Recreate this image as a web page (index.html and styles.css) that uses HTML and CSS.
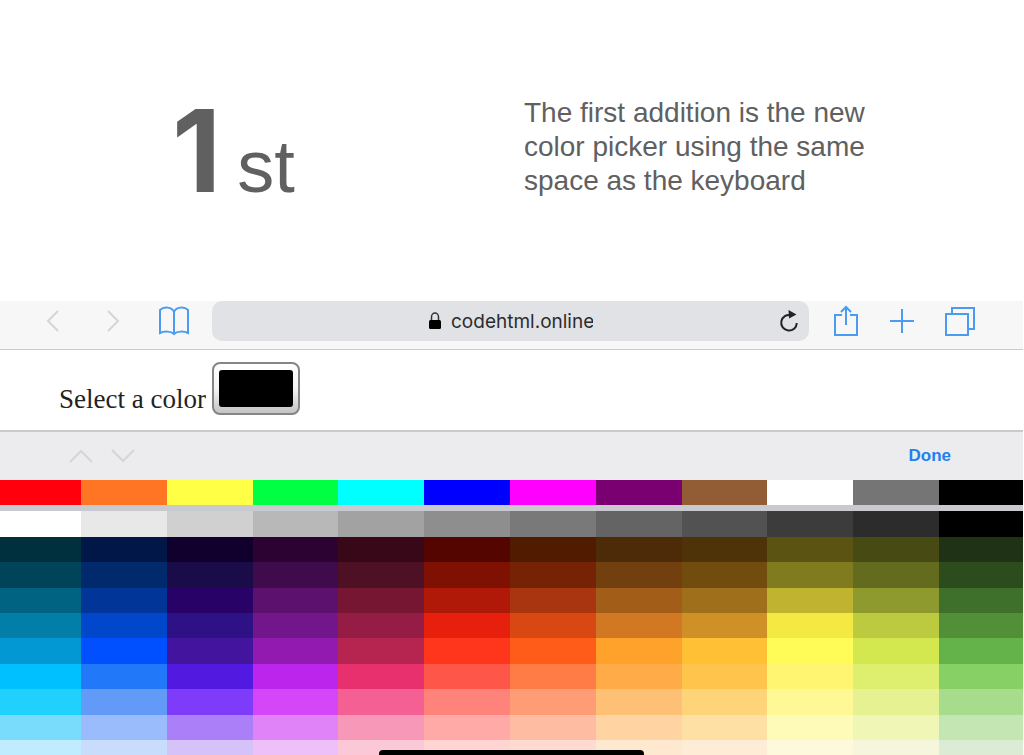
FILE: index.html
```
<!DOCTYPE html>
<html lang="en">
<head>
<meta charset="utf-8">
<meta name="viewport" content="width=device-width, initial-scale=1">
<title>Color picker</title>
<link rel="stylesheet" href="styles.css">
</head>
<body>
<main class="page">
  <section class="intro">
    <h1 class="ordinal"><span class="ordinal-number">1</span><span class="ordinal-suffix">st</span></h1>
    <p class="intro-text">The first addition is the new color picker using the same space as the keyboard</p>
  </section>

  <section class="device">
    <nav class="toolbar" aria-label="Browser">
      <div class="nav-group">
        <button class="icon-button faded" aria-label="Back"><svg width="14" height="22" viewBox="0 0 14 22"><path d="M12 1 2 11l10 10"/></svg></button>
        <button class="icon-button faded" aria-label="Forward"><svg width="14" height="22" viewBox="0 0 14 22"><path d="M2 1l10 10L2 21"/></svg></button>
        <button class="icon-button" aria-label="Bookmarks"><svg width="32" height="30" viewBox="0 0 32 30"><path d="M16 28V6C14 1 6 0 2 4v23c4-2 11-2 14 1 3-3 10-3 14-1V4c-4-4-12-3-14 2"/></svg></button>
      </div>
      <div class="address">
        <svg class="lock" width="14" height="18" viewBox="0 0 14 18"><path d="M3.500 9V5a3.500 4 0 0 1 7 0v4" fill="none" stroke="#333" stroke-width="1.500"/><rect x="1" y="8" width="12" height="9" rx="1.500"/></svg>
        <input class="address-input" type="text" value="codehtml.online" aria-label="Address">
        <button class="icon-button reload" aria-label="Reload"><svg width="20" height="22" viewBox="0 0 20 22"><path d="M12 5.200A7.800 7.800 0 1 0 17.800 13"/><path class="solid" d="M9.500 0l8 4.500-7.500 4z"/></svg></button>
      </div>
      <div class="action-group">
        <button class="icon-button" aria-label="Share"><svg width="26" height="32" viewBox="0 0 26 32"><path d="M9 10H2v20h22V10h-7M13 20V2M8 7l5-5 5 5"/></svg></button>
        <button class="icon-button" aria-label="New tab"><svg width="26" height="26" viewBox="0 0 26 26"><path d="M13 1v24M1 13h24"/></svg></button>
        <button class="icon-button" aria-label="Tabs"><svg width="30" height="30" viewBox="0 0 30 30"><path d="M1 8h22v21H1zM7 8V2h22v21h-6"/></svg></button>
      </div>
    </nav>

    <div class="web-content">
      <label for="color">Select a color</label>
      <input class="color-well" id="color" type="color" value="#000000">
    </div>

    <div class="accessory">
      <button class="icon-button faded" aria-label="Previous field"><svg width="24" height="14" viewBox="0 0 24 14"><path d="M1 13 12 2l11 11"/></svg></button>
      <button class="icon-button faded" aria-label="Next field"><svg width="24" height="14" viewBox="0 0 24 14"><path d="M1 1l11 11L23 1"/></svg></button>
      <button class="done">Done</button>
    </div>

    <div class="swatches presets" id="presets"></div>
    <div class="swatches palette" id="palette"></div>
    <div class="home-indicator"></div>
  </section>
</main>
<script src="palette.js"></script>
</body>
</html>
```
FILE: styles.css
```
* { box-sizing: border-box; }

body {
  margin: 0;
  background: #fff;
  font-family: "Liberation Sans", Arial, sans-serif;
}

button {
  border: 0;
  padding: 0;
  background: none;
  font: inherit;
}

.page {
  min-height: 100vh;
  display: flex;
  flex-direction: column;
}

.intro {
  display: grid;
  grid-template-columns: 1fr 1fr;
  padding: 96px 0 103px;
  color: #606060;
}

.ordinal {
  display: flex;
  align-items: baseline;
  gap: 16px;
  height: 102px;
  margin: 0;
  padding-left: 172px;
  line-height: 110px;
}

.ordinal-number {
  font-family: Inter, sans-serif;
  font-size: 114px;
  font-weight: 700;
}

.ordinal-suffix {
  font-size: 74px;
  font-weight: 400;
}

.intro-text {
  max-width: 372px;
  margin: 0;
  padding-left: 12px;
  font-size: 28px;
  line-height: 34px;
}

.device {
  position: relative;
  flex: 1;
  display: flex;
  flex-direction: column;
  margin-right: 1px;
}

.toolbar {
  display: flex;
  align-items: center;
  gap: 24px;
  padding: 0 48px 8px 46px;
  border-bottom: 1px solid #cbcbcd;
  background: #f7f7f7;
}

.nav-group,
.action-group {
  display: flex;
  align-items: center;
}

.nav-group { gap: 46px; margin-right: -2px; }
.nav-group .icon-button:last-child { margin-left: -8px; }
.action-group { gap: 30px; }

.icon-button { display: flex; color: #4b9cf0; }

.icon-button svg {
  fill: none;
  stroke: currentColor;
  stroke-width: 2;
}

.icon-button.faded { color: #d5d5d7; }

.address {
  position: relative;
  flex: 1;
  display: flex;
  align-items: center;
  justify-content: center;
  gap: 9px;
  height: 40px;
  border-radius: 10px;
  background: #e1e2e6;
}

.address-input {
  width: 142px;
  border: 0;
  padding: 0;
  background: none;
  color: #2c2c2e;
  font-family: Inter, "Liberation Sans", sans-serif;
  font-size: 19px;
}

.icon-button.reload {
  position: absolute;
  right: 10px;
  color: #222;
}

.reload .solid { fill: currentColor; stroke: none; }

.web-content {
  display: flex;
  align-items: flex-start;
  gap: 6px;
  padding: 12px 59px 15px;
  border-bottom: 2px solid #cacacc;
  color: #222;
  font-family: "Liberation Serif", "Times New Roman", serif;
  font-size: 27px;
  line-height: 30px;
}

.web-content label { padding-top: 22px; }

.color-well {
  appearance: none;
  width: 88px;
  height: 53px;
  border: 2px solid #858585;
  border-radius: 8px;
  padding: 6px 5px;
  background: linear-gradient(#fff, #f4f4f4 50%, #c4c4c4);
}

.color-well::-webkit-color-swatch-wrapper { padding: 0; }
.color-well::-webkit-color-swatch { border: 0; border-radius: 3px; }

.accessory {
  display: flex;
  align-items: center;
  gap: 18px;
  height: 48px;
  padding: 0 72px 0 69px;
  background: #ececef;
}

.done {
  margin-left: auto;
  color: #2380ee;
  font-size: 17px;
  font-weight: 700;
}

.swatches {
  display: grid;
  grid-template-columns: 810fr repeat(10, 858fr) 840fr;
}

.presets {
  grid-template-rows: 25px;
  border-bottom: 6px solid #c9c9d0;
}

.palette {
  flex: 1;
  grid-template-rows: 26px 25px 26px 25px 25px 26px 25px 26px 25px minmax(15px, 1fr);
}

.home-indicator {
  position: absolute;
  bottom: 0;
  left: 37%;
  width: 26%;
  height: 5px;
  border-radius: 4px 4px 0 0;
  background: #000;
}
```
FILE: palette.js
```
const presets = ["#ff000c #ff7524 #ffff45 #00ff42 #00ffff #0000ff #ff00ff #7a0072 #925c34 #ffffff #757575 #000000"];

const palette = [
  "#ffffff #e8e8e8 #d0d0d0 #b8b8b8 #a2a2a2 #8e8e8e #797979 #646464 #525252 #3c3c3c #2c2c2c #000000",
  "#002f3d #001748 #11002e #2c0232 #390818 #540500 #511b00 #4e2b08 #4e3208 #5a5312 #474a12 #203215",
  "#014459 #012a6c #190c48 #3f0b4c #4d1024 #7f1102 #762205 #71400e #724b0f #817b20 #636b1e #2c4c1d",
  "#016382 #013598 #290268 #5c116e #761633 #b01908 #a93410 #a25d18 #a06f1c #bfb330 #8e9a2e #3e702b",
  "#017fa9 #0147cb #2f1186 #72168c #951c44 #e6200c #d94712 #d27822 #cf9126 #f4e842 #bbca3e #529038",
  "#0198d4 #0050ff #43159f #921ab0 #b62450 #ff361c #ff5c19 #ffa22c #ffc036 #fffc57 #d2e84e #64b24a",
  "#00c0ff #2178f8 #521ae0 #bc25eb #e9306f #ff564a #ff7c46 #ffac48 #ffc44c #fff570 #deee6e #86d066",
  "#20d0fd #629af8 #7e3bfa #d446f8 #f46093 #ff827b #fe9c75 #fec074 #fed478 #fff894 #e6f192 #a6dc8c",
  "#7adcfd #9abcfc #aa7ff8 #e082f8 #f898b8 #ffaaa6 #febca2 #ffd4a2 #fee0a4 #fefab8 #eff6b6 #c4e6b2",
  "#c0ecff #c8dcfc #d4c2f9 #eec0fa #fbc8d8 #ffd4d2 #ffdad0 #ffe8d0 #feecd6 #fef8dc #f5f6dc #dcecd4"
];

function fill(id, rows) {
  const grid = document.getElementById(id);
  rows.join(" ").split(" ").forEach(color => {
    const swatch = document.createElement("button");
    swatch.style.background = color;
    swatch.setAttribute("aria-label", color);
    swatch.addEventListener("click", () => {
      document.getElementById("color").value = color;
    });
    grid.append(swatch);
  });
}

fill("presets", presets);
fill("palette", palette);
```
